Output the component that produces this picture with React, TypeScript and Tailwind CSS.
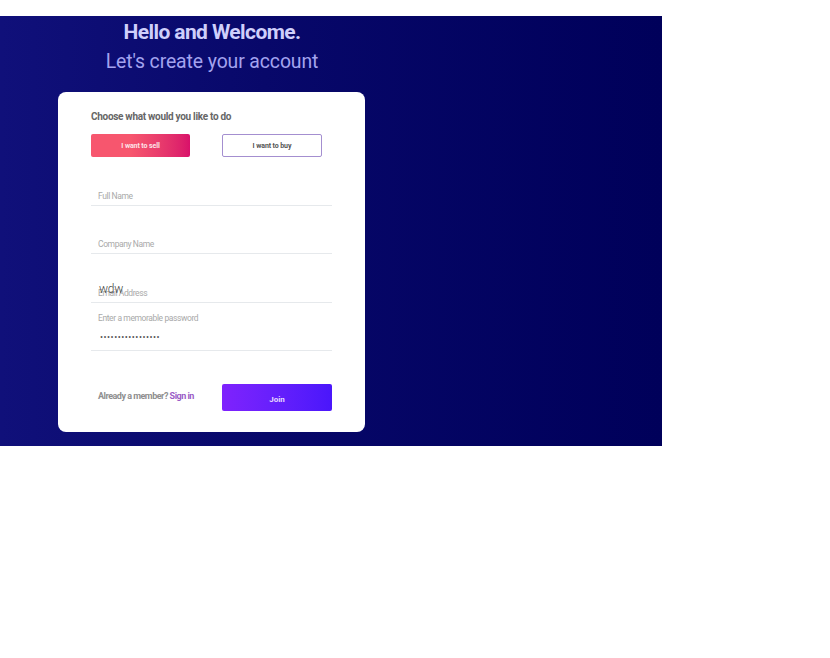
import React from "react";

const Field: React.FC<{ label: string; value?: string; tall?: boolean }> = ({ label, value, tall }) => (
  <div className={`relative flex items-end border-b border-[#e6e9ec] pb-[3px] pl-[7px] ${tall ? "h-[49px]" : "h-[48px]"}`}>
    <span className="text-[8.5px] leading-[12px] tracking-[-0.4px] text-[#a9a9a9]">{label}</span>
    {value && (
      <span className="absolute bottom-[5px] left-[8px] text-[12px] leading-[16px] font-light tracking-[-0.2px] text-[#444444]">{value}</span>
    )}
  </div>
);

export default function App() {
  return (
    <div className="min-h-[658px] bg-white pt-4 font-['Roboto',sans-serif]">
      <div className="h-[430px] w-[662px] bg-gradient-to-r from-[#10107a] via-[#08086a] via-40% to-[#00005a]">
        <div className="flex w-[424px] flex-col items-center">
          <h1 className="mt-[3px] text-[21px] leading-[26px] font-bold tracking-[-0.6px] text-[#cfcffb]">
            Hello and Welcome.
          </h1>
          <h2 className="mt-[2px] text-[19.4px] leading-[30px] font-normal tracking-[-0.1px] text-[#a3a3ef]">
            Let's create your account
          </h2>
        </div>
        <div className="mt-[15px] ml-[58px] h-[340px] w-[307px] rounded-[8px] bg-white px-[33px] pt-[18px]">
          <p className="text-[10px] leading-[14px] font-bold tracking-[-0.3px] text-[#666666]">Choose what would you like to do</p>
          <div className="mt-[10px] flex justify-between pr-[10px]">
            <button className="h-[23px] w-[99px] rounded-[2px] bg-gradient-to-r from-[#f7566e] from-40% to-[#d9106a] pt-[2px] text-[7px] font-bold tracking-[-0.1px] text-[#fde3e8]">
              I want to sell
            </button>
            <button className="h-[23px] w-[100px] rounded-[2px] border border-[#a48fd0] bg-white pt-[2px] text-[7px] font-bold tracking-[-0.1px] text-[#555555]">
              I want to buy
            </button>
          </div>
          <div className="mt-[1px]">
            <Field label="Full Name" />
            <Field label="Company Name" />
            <Field label="Email Address" value="wdw" tall />
            <div className="flex h-[48px] flex-col border-b border-[#e6e9ec] pl-[7px]">
              <span className="mt-[9px] text-[8.5px] leading-[12px] tracking-[-0.4px] text-[#a9a9a9]">Enter a memorable password</span>
              <span className="mt-[6px] pl-[2px] text-[9px] leading-[14px] tracking-[0.5px] text-[#555555]">•••••••••••••••••</span>
            </div>
          </div>
          <div className="mt-[33px] flex items-start">
            <p className="mt-[6px] w-[131px] pl-[7px] text-[9px] leading-[12px] font-bold tracking-[-0.5px] text-[#8f8f8f]">
              Already a member? <span className="text-[#9a5cc6]">Sign in</span>
            </p>
            <button className="h-[27px] w-[110px] rounded-[2px] bg-gradient-to-r from-[#7f22fd] to-[#4a16fb] pt-[4px] text-[8px] font-bold text-[#e6dcfd]">
              Join
            </button>
          </div>
        </div>
      </div>
    </div>
  );
}
